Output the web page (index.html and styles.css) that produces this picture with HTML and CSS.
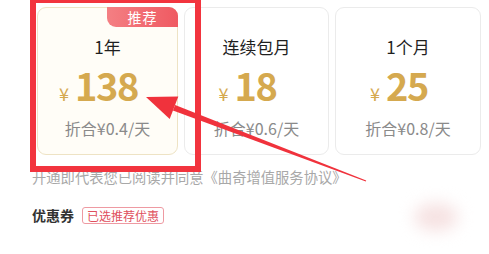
FILE: index.html
```html
<!DOCTYPE html>
<html lang="zh">
<head>
<meta charset="utf-8">
<link rel="stylesheet" href="styles.css">
</head>
<body>
<div class="page">
  <div class="plans">
    <div class="plan plan-active">
      <div class="badge">推荐</div>
      <div class="plan-name">1年</div>
      <div class="plan-price"><span class="yen">¥</span><span class="amount">138</span></div>
      <div class="plan-daily">折合¥0.4/天</div>
    </div>
    <div class="plan">
      <div class="plan-name">连续包月</div>
      <div class="plan-price"><span class="yen">¥</span><span class="amount">18</span></div>
      <div class="plan-daily">折合¥0.6/天</div>
    </div>
    <div class="plan">
      <div class="plan-name">1个月</div>
      <div class="plan-price"><span class="yen">¥</span><span class="amount">25</span></div>
      <div class="plan-daily">折合¥0.8/天</div>
    </div>
  </div>
  <p class="agreement">开通即代表您已阅读并同意《曲奇增值服务协议》</p>
  <div class="coupon">
    <span class="coupon-label">优惠券</span>
    <span class="coupon-tag">已选推荐优惠</span>
  </div>

  <div class="highlight-box"></div>
  <svg class="arrow" width="489" height="254" viewBox="0 0 489 254">
    <polygon points="172.9,110.5 365.8,181.6 366.2,180.4 175.1,104.9" fill="#f0323c"/>
    <polygon points="146,97 178.3,96.5 169.7,118.9" fill="#f0323c"/>
  </svg>
  <div class="blob"></div>
</div>
</body>
</html>
```

FILE: styles.css
```css
* {
  box-sizing: border-box;
}

html, body {
  margin: 0;
  padding: 0;
  background: #ffffff;
}

.page {
  position: relative;
  width: 489px;
  height: 254px;
  overflow: hidden;
  padding: 7px 8px 0 37px;
  font-family: "Noto Sans CJK SC", "Noto Sans", sans-serif;
}

.plans {
  display: grid;
  grid-template-columns: 141px 145px 146px;
  column-gap: 6px;
}

.plan {
  position: relative;
  height: 148px;
  border: 1px solid #ebebeb;
  border-radius: 9px;
  background: #ffffff;
  display: flex;
  flex-direction: column;
  align-items: center;
  padding-top: 28px;
}

.plan-active {
  background: #fffdf7;
  border-color: #eee3c4;
}

.badge {
  position: absolute;
  top: -1px;
  right: -1px;
  width: 71px;
  height: 20px;
  border-radius: 0 9px 0 9px;
  background: linear-gradient(90deg, #f47f83 0%, #ef5a62 100%);
  color: #ffffff;
  font-size: 14px;
  line-height: 20px;
  text-align: center;
  letter-spacing: 1px;
}

.plan-name {
  font-size: 17px;
  line-height: 22px;
  font-weight: 400;
  color: #1f1f1f;
}

.plan-price {
  display: flex;
  align-items: baseline;
  margin-top: 9px;
  padding-right: 18px;
  color: #d5a94f;
  line-height: 36px;
  height: 36px;
}

.yen {
  font-size: 18px;
  margin-right: 6px;
}

.amount {
  font-size: 38px;
  font-weight: 700;
  letter-spacing: -1.5px;
}

.plan-daily {
  margin-top: 15px;
  font-size: 16px;
  line-height: 20px;
  color: #8a8a8a;
}

.agreement {
  margin: 13px 0 0 -5px;
  font-size: 14.3px;
  line-height: 18px;
  color: #a8a8a8;
}

.coupon {
  display: flex;
  align-items: center;
  margin: 19px 0 0 -5px;
}

.coupon-label {
  font-size: 14px;
  font-weight: 700;
  color: #333333;
}

.coupon-tag {
  margin-left: 8px;
  padding: 0 4px;
  font-size: 12px;
  line-height: 15px;
  color: #e0505e;
  border: 1px solid #ee9aa2;
  border-radius: 3px;
}

.highlight-box {
  position: absolute;
  left: 30px;
  top: -3px;
  width: 171px;
  height: 175px;
  border: 6px solid #f2343e;
}

.arrow {
  position: absolute;
  left: 0;
  top: 0;
}

.blob {
  position: absolute;
  left: 414px;
  top: 203px;
  width: 44px;
  height: 28px;
  border-radius: 50%;
  background: #f6e2e2;
  filter: blur(8px);
}
```
